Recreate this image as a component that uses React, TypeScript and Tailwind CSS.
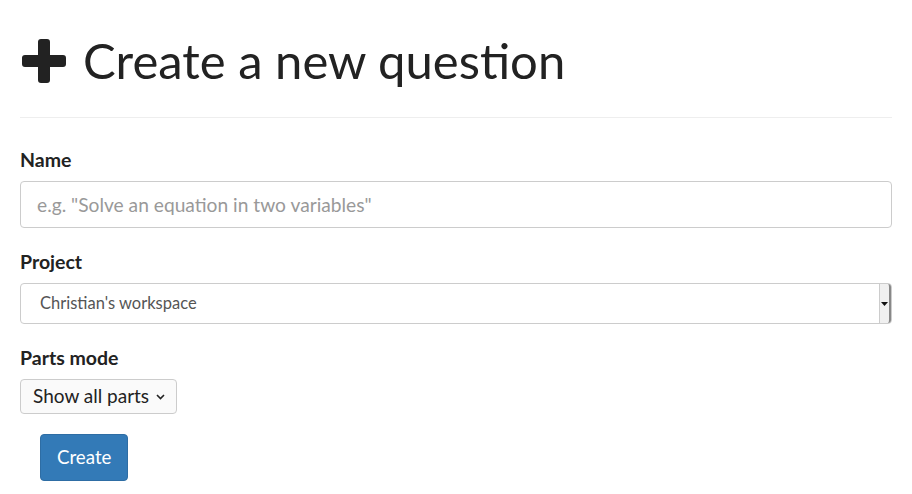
export default function App() {
  return (
    <div className="min-h-screen bg-white px-5 text-[#222] [font-family:Lato,'Liberation_Sans',sans-serif]">
      <div className="flex items-center gap-[15px] pt-[30px] pb-[27px]">
        <svg width="48" height="48" viewBox="0 0 48 48" className="shrink-0 translate-y-[1px]">
          <path
            d="M18 5 a3 3 0 0 1 3-3 h6 a3 3 0 0 1 3 3 v13 h13 a3 3 0 0 1 3 3 v6 a3 3 0 0 1-3 3 h-13 v13 a3 3 0 0 1-3 3 h-6 a3 3 0 0 1-3-3 v-13 h-13 a3 3 0 0 1-3-3 v-6 a3 3 0 0 1 3-3 h13 z"
            fill="#222"
          />
        </svg>
        <h1 className="text-[49px] leading-[60px] font-normal">Create a new question</h1>
      </div>
      <div className="border-t border-[#eee]" />

      <div className="pt-[32px]">
        <label className="block text-[19.5px] leading-[20px] font-bold">Name</label>
        <input
          type="text"
          placeholder={'e.g. "Solve an equation in two variables"'}
          className="mt-[11px] block h-[47px] w-full rounded-[4px] border border-[#ccc] px-4 text-[19.2px] placeholder:text-[#999] outline-none"
        />
      </div>

      <div className="pt-[24px]">
        <label className="block text-[19.5px] leading-[20px] font-bold">Project</label>
        <div className="mt-[11px] flex h-[41px] w-full items-stretch rounded-[4px] border border-[#ccc]">
          <div className="flex flex-1 items-center pl-[19px] text-[16.5px] text-[#555]">
            Christian&apos;s workspace
          </div>
          <div className="flex w-[12px] items-center justify-center border-l border-[#ccc] border-r-2 border-r-[#888] bg-[#f0f0f0] rounded-r-[3px]">
            <svg width="7" height="4" viewBox="0 0 7 4">
              <path d="M0 0 h7 l-3.5 4 z" fill="#111" />
            </svg>
          </div>
        </div>
      </div>

      <div className="pt-[24px]">
        <label className="block text-[19.5px] leading-[20px] font-bold">Parts mode</label>
        <div className="mt-[11px] inline-flex h-[35px] items-center gap-[7px] rounded-[4px] border border-[#ccc] bg-[#fafafa] pl-[12px] pr-[11px] text-[19px] text-[#222]">
          Show all parts
          <svg width="9" height="6" viewBox="0 0 9 6">
            <path d="M1 1 l3.5 3.5 l3.5-3.5" fill="none" stroke="#222" strokeWidth="1.6" />
          </svg>
        </div>
      </div>

      <div className="pl-5 pt-[20px]">
        <button className="h-[47px] rounded-[4px] border border-[#2e6da4] bg-[#337ab7] px-4 text-[18.7px] text-white">
          Create
        </button>
      </div>
    </div>
  );
}
